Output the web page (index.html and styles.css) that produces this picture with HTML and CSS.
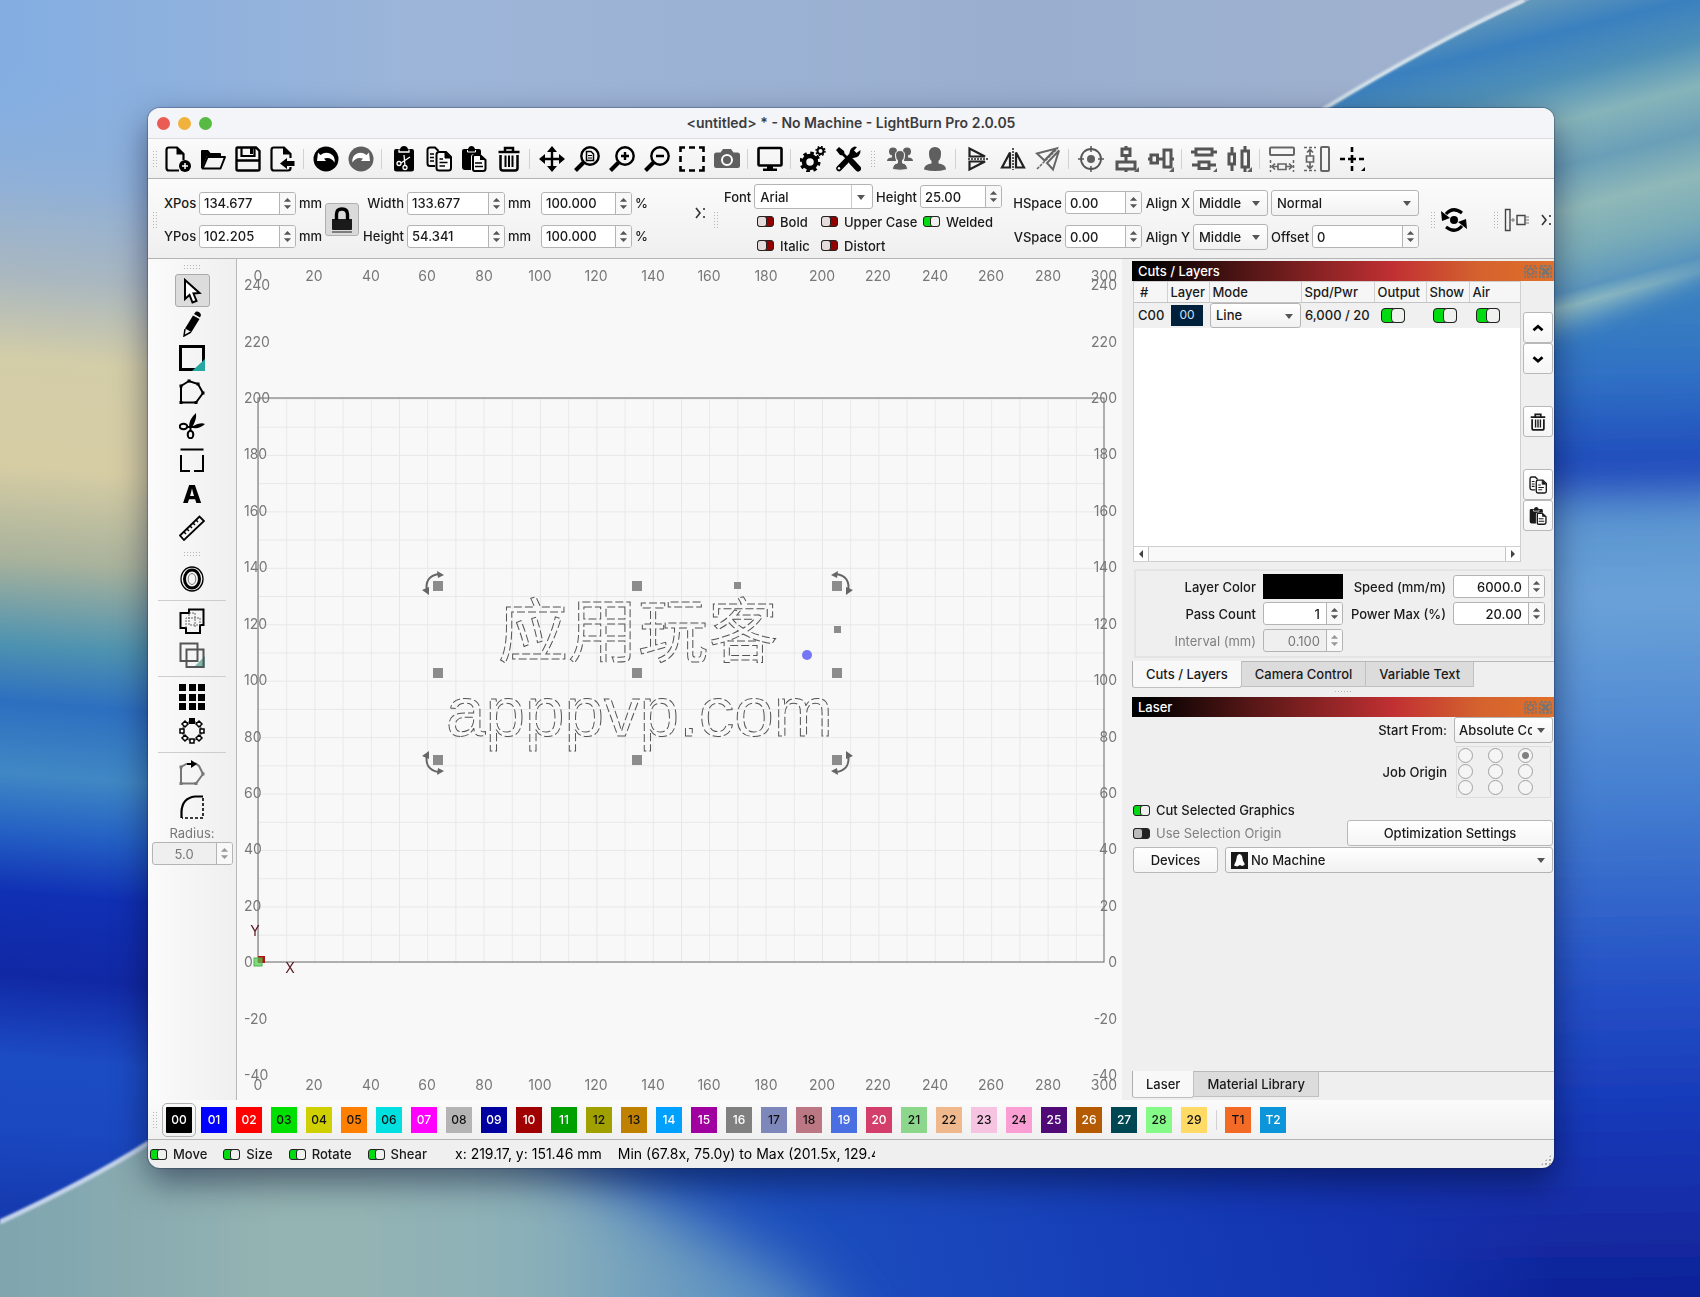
FILE: index.html
```html
<!DOCTYPE html>
<html lang="en">
<head>
<meta charset="utf-8">
<title>&lt;untitled&gt; * - No Machine - LightBurn Pro 2.0.05</title>
<link rel="stylesheet" href="styles.css">
</head>
<body>
<svg class="wallpaper" viewBox="0 0 1700 1297" preserveAspectRatio="none" aria-hidden="true">
  <defs>
    <linearGradient id="wTop" x1="0" x2="1"><stop offset="0" stop-color="#83aee2"/><stop offset=".25" stop-color="#9db5d8"/><stop offset=".6" stop-color="#9aafd0"/><stop offset="1" stop-color="#a2b2cc"/></linearGradient>
    <linearGradient id="wLeft" gradientUnits="userSpaceOnUse" x1="0" y1="60" x2="-90" y2="1240"><stop offset="0" stop-color="#86afe0" stop-opacity="0"/><stop offset=".1" stop-color="#8fb0d8"/><stop offset=".18" stop-color="#a9b7c0"/><stop offset=".25" stop-color="#d3cda8"/><stop offset=".34" stop-color="#d6cda4"/><stop offset=".42" stop-color="#a8b29c"/><stop offset=".49" stop-color="#4f93b0"/><stop offset=".54" stop-color="#2d6fc0"/><stop offset=".6" stop-color="#4088c4"/><stop offset=".65" stop-color="#2460c4"/><stop offset=".7" stop-color="#1030b4"/><stop offset=".77" stop-color="#1128a4"/><stop offset=".84" stop-color="#1c4cc4"/><stop offset=".9" stop-color="#1a48c0"/><stop offset="1" stop-color="#1434a8"/></linearGradient>
    <linearGradient id="wRight" gradientUnits="userSpaceOnUse" x1="1600" y1="300" x2="1620" y2="1297"><stop offset="0" stop-color="#3a80c0"/><stop offset=".08" stop-color="#2f70c4"/><stop offset=".17" stop-color="#1f49bc"/><stop offset=".22" stop-color="#5b95d0"/><stop offset=".3" stop-color="#6aa2d8"/><stop offset=".5" stop-color="#447ed0"/><stop offset=".68" stop-color="#2552c6"/><stop offset=".82" stop-color="#1638b8"/><stop offset="1" stop-color="#102296"/></linearGradient>
    <linearGradient id="wStripe" gradientUnits="userSpaceOnUse" x1="1560" y1="-20" x2="1650" y2="330"><stop offset="0" stop-color="#6f9fb8"/><stop offset=".14" stop-color="#3a80bf"/><stop offset=".26" stop-color="#4f90b8"/><stop offset=".38" stop-color="#86b4ba"/><stop offset=".5" stop-color="#6a9fb8"/><stop offset=".62" stop-color="#8fb8b8"/><stop offset=".74" stop-color="#78abb8"/><stop offset=".84" stop-color="#5b96be"/><stop offset=".88" stop-color="#8fbac0"/><stop offset="1" stop-color="#3f84c0"/></linearGradient>
    <linearGradient id="wBottom" gradientUnits="userSpaceOnUse" x1="0" y1="1297" x2="1500" y2="1000"><stop offset="0" stop-color="#2458bc"/><stop offset=".46" stop-color="#1d50bc"/><stop offset=".6" stop-color="#1a48bc"/><stop offset=".8" stop-color="#1438b4"/><stop offset=".88" stop-color="#1433b0"/><stop offset="1" stop-color="#1433b0" stop-opacity="0"/></linearGradient>
    <linearGradient id="wTeal" gradientUnits="userSpaceOnUse" x1="0" y1="0" x2="760" y2="0"><stop offset="0" stop-color="#7fa4ae"/><stop offset=".4" stop-color="#96b5b3"/><stop offset=".7" stop-color="#8bb0b8"/><stop offset="1" stop-color="#5a90c4"/></linearGradient>
    <filter id="soft" x="-20%" y="-20%" width="140%" height="140%"><feGaussianBlur stdDeviation="14"/></filter>
    <filter id="haze" x="-20%" y="-40%" width="140%" height="180%"><feGaussianBlur stdDeviation="32"/></filter>
    <filter id="edge"><feGaussianBlur stdDeviation="1"/></filter>
    <clipPath id="hill"><path d="M0 1222Q90 1180 148 1143L300 1060H1700V1297H0Z"/></clipPath>
  </defs>
  <rect width="1700" height="1297" fill="url(#wTop)"/>
  <rect width="600" height="1297" fill="url(#wLeft)"/>
  <path d="M1320 112Q1430 45 1530 0H1700V420H1320Z" fill="url(#wStripe)"/>
  <path d="M1320 420Q1600 330 1760 240V1360H1320Z" fill="url(#wRight)" filter="url(#soft)"/>
  <path d="M1322 110Q1430 44 1524 0" fill="none" stroke="#d5e2ea" stroke-width="4" filter="url(#edge)"/>
  <g clip-path="url(#hill)">
    <rect y="1050" width="1700" height="250" fill="url(#wBottom)"/>
    <path d="M-150 1000H300L560 1150L800 1280L900 1420H-150Z" fill="url(#wTeal)" filter="url(#haze)"/>
  </g>
  <path d="M0 1222Q90 1180 150 1142" fill="none" stroke="#c3d3ea" stroke-width="5" filter="url(#edge)"/>
</svg>
<svg class="sprite" aria-hidden="true">
  <symbol id="i-copy" viewBox="0 0 26 26"><path d="M9 20H4Q1.500 20 1.500 17.500V4Q1.500 1.500 4 1.500H9L12.500 5" fill="none" stroke="currentColor" stroke-width="2"/><path d="M4 8H8M4 11.500H8M4 15H8" stroke="currentColor" stroke-width="1.500"/><path d="M13 6H20L25 11V22Q25 24.500 22.500 24.500H13Q10.500 24.500 10.500 22V8.500Q10.500 6 13 6Z" fill="#fafafa" stroke="currentColor" stroke-width="2"/><path d="M19 6V12H25" fill="currentColor" stroke="currentColor"/><path d="M13.500 13H17M13.500 16.500H21.500M13.500 20H19" stroke="currentColor" stroke-width="1.500"/></symbol>
  <symbol id="i-paste" viewBox="0 0 26 26"><path d="M3 3H7Q8 0 10.500 0T14 3H18Q20 3 20 5V8H13Q10 8 10 11V24H4Q1 24 1 21V5Q1 3 3 3Z"/><path d="M6.500 4V6H14.500V4" fill="none" stroke="#fff"/><path d="M13.500 9H19L24.500 14V22.500Q24.500 25 22 25H13.500Q12 25 12 23V11Q12 9 13.500 9Z" fill="#fafafa" stroke="currentColor" stroke-width="2"/><path d="M19 9V14H24.500Z"/><path d="M14 17H21M14 20.500H22" stroke="currentColor" stroke-width="1.500"/></symbol>
  <symbol id="i-trash" viewBox="0 0 26 26"><path d="M2.500 6H23.500M9 5V2H17V5" fill="none" stroke="currentColor" stroke-width="2.500"/><path d="M4.500 9V22Q4.500 24.500 7 24.500H19Q21.500 24.500 21.500 22V9" fill="none" stroke="currentColor" stroke-width="2.500"/><path d="M9.500 9.500V21M13 9.500V21M16.500 9.500V21" stroke="currentColor" stroke-width="2"/></symbol>
  <symbol id="i-spin" viewBox="0 0 10 14"><path d="M1 5L5 1L9 5Z"/><path d="M1 9L5 13L9 9Z"/></symbol>
  <symbol id="i-float" viewBox="0 0 13 13"><path d="M1 1H12V12H1Z" fill="none" stroke="currentColor" stroke-width="1.500" stroke-dasharray="3 1"/><path d="M3 6.500L6.500 3L10 6.500L6.500 10Z" fill="none" stroke="currentColor" stroke-width="1.500"/><path d="M3 3L5 5M8 8L10 10M10 3L8 5M3 10L5 8" stroke="currentColor" stroke-width="1.500"/></symbol>
  <symbol id="i-close" viewBox="0 0 13 13"><path d="M1 1H12V12H1Z" fill="none" stroke="currentColor" stroke-width="1.500" stroke-dasharray="3 1"/><path d="M3 3L10 10M10 3L3 10" stroke="currentColor" stroke-width="3"/></symbol>
  <symbol id="i-rot" viewBox="-16 -16 24 28"><path d="M-11 6Q-14 -10 1 -12" fill="none" stroke="currentColor" stroke-width="2"/><path d="M-16 4L-9 9L-9 1ZM6 -11L-1 -15L0 -8Z"/></symbol>
</svg>

<main class="window">
  <header class="titlebar">
    <div class="lights"><button class="light red" aria-label="Close"></button><button class="light amber" aria-label="Minimize"></button><button class="light green" aria-label="Zoom"></button></div>
    <h1>&lt;untitled&gt; * - No Machine - LightBurn Pro 2.0.05</h1>
  </header>

  <nav class="toolbar" aria-label="Main tools">
    <i class="grip"></i>
    <button class="tool" aria-label="New"><svg viewBox="0 0 26 26"><path d="M14 24.500H4Q1.500 24.500 1.500 22V4Q1.500 1.500 4 1.500H12L18.500 8V14" fill="none" stroke="#000" stroke-width="2.200"/><path d="M11.500 1V8.500H19"/><circle cx="20" cy="20" r="6"/><path d="M20 17V23M17 20H23" stroke="#fff" stroke-width="1.500"/></svg></button>
    <button class="tool" aria-label="Open"><svg viewBox="0 0 26 26"><path d="M1 22V5Q1 4 2 4H8L10.500 7H20Q21 7 21 8V10H7L2 22Z"/><path d="M7.500 11H25L20.500 22.500H2.500Z" fill="none" stroke="#000" stroke-width="2" stroke-linejoin="round"/></svg></button>
    <button class="tool" aria-label="Save"><svg viewBox="0 0 26 26"><path d="M2.500 1.500H21L24.500 5V23Q24.500 24.500 23 24.500H3Q1.500 24.500 1.500 23V3Q1.500 1.500 2.500 1.500Z" fill="none" stroke="#000" stroke-width="2.400"/><path d="M6.500 1V10H19.500V1" fill="none" stroke="#000" stroke-width="2.200"/><path d="M15 2H18V8H15Z"/><path d="M1 14.500H25" fill="none" stroke="#000" stroke-width="2.400"/></svg></button>
    <button class="tool" aria-label="Export"><svg viewBox="0 0 26 26"><path d="M20.500 21V22Q20.500 24.500 18 24.500H4Q1.500 24.500 1.500 22V4Q1.500 1.500 4 1.500H14L20.500 8V12" fill="none" stroke="#000" stroke-width="2.200"/><path d="M13 1V8.500H21M10 17.500L17 12V15H24.500V20H17V23Z"/></svg></button>
    <i class="sep"></i>
    <button class="tool" aria-label="Undo"><svg viewBox="0 0 26 26"><circle cx="13" cy="13" r="12.500"/><path d="M4 15L5 6.500L7.500 9Q12 5.500 17 7.500Q22.500 10 21.500 16.500Q18 10.500 11 12.500L13 15Z" fill="#fff"/></svg></button>
    <button class="tool off" aria-label="Redo"><svg viewBox="0 0 26 26"><circle cx="13" cy="13" r="12.500"/><path d="M22 15L21 6.500L18.500 9Q14 5.500 9 7.500Q3.500 10 4.500 16.500Q8 10.500 15 12.500L13 15Z" fill="#fff"/></svg></button>
    <i class="sep"></i>
    <button class="tool" aria-label="Cut"><svg viewBox="0 0 26 26"><path d="M5 3H9Q10 0 13 0T17 3H21Q23 3 23 5V23Q23 25.500 20.500 25.500H5.500Q3 25.500 3 23V5Q3 3 5 3Z"/><path d="M8 3.500V6H18V3.500M19 11L10 17M13 9L14 20" fill="none" stroke="#fff" stroke-width="1.300"/><circle cx="8" cy="17.500" r="2" fill="none" stroke="#fff" stroke-width="1.300"/><circle cx="14" cy="21.500" r="2" fill="none" stroke="#fff" stroke-width="1.300"/></svg></button>
    <button class="tool" aria-label="Copy"><svg><use href="#i-copy"/></svg></button>
    <button class="tool" aria-label="Paste"><svg><use href="#i-paste"/></svg></button>
    <button class="tool" aria-label="Delete"><svg><use href="#i-trash"/></svg></button>
    <i class="sep"></i>
    <button class="tool" aria-label="Pan"><svg viewBox="0 0 26 26"><path d="M13 3V23M3 13H23" stroke="#000" stroke-width="2.400"/><path d="M13 0L18 6H8ZM13 26L18 20H8ZM0 13L6 8V18ZM26 13L20 8V18Z"/></svg></button>
    <button class="tool" aria-label="Zoom to page"><svg viewBox="0 0 26 26"><circle cx="16" cy="10" r="8.700" fill="none" stroke="#000" stroke-width="2.400"/><path d="M9.500 16.500L1.500 24.500" stroke="#000" stroke-width="4"/><path d="M12.500 5.500H17L19.500 8V14.500H12.500Z" fill="none" stroke="#000" stroke-width="1.500"/><path d="M14 9.500H18M14 12H18" stroke="#000"/></svg></button>
    <button class="tool" aria-label="Zoom in"><svg viewBox="0 0 26 26"><circle cx="16" cy="10" r="8.700" fill="none" stroke="#000" stroke-width="2.400"/><path d="M9.500 16.500L1.500 24.500" stroke="#000" stroke-width="4"/><path d="M16 6V14M12 10H20" stroke="#000" stroke-width="2.400"/></svg></button>
    <button class="tool" aria-label="Zoom out"><svg viewBox="0 0 26 26"><circle cx="16" cy="10" r="8.700" fill="none" stroke="#000" stroke-width="2.400"/><path d="M9.500 16.500L1.500 24.500" stroke="#000" stroke-width="4"/><path d="M12 10H20" stroke="#000" stroke-width="2.400"/></svg></button>
    <button class="tool" aria-label="Frame selection"><svg viewBox="0 0 26 26"><path d="M1.500 6V1.500H6M10 1.500H16M20 1.500H24.500V6M24.500 10V16M24.500 20V24.500H20M16 24.500H10M6 24.500H1.500V20M1.500 16V10" fill="none" stroke="#000" stroke-width="2.600"/></svg></button>
    <button class="tool off" aria-label="Camera"><svg viewBox="0 0 26 26"><path d="M2.500 6.500H6.500L9 3H17L19.500 6.500H23.500Q26 6.500 26 9V19.500Q26 22 23.500 22H2.500Q0 22 0 19.500V9Q0 6.500 2.500 6.500Z"/><circle cx="13" cy="14" r="5" fill="none" stroke="#fff" stroke-width="2"/></svg></button>
    <i class="sep"></i>
    <button class="tool" aria-label="Preview"><svg viewBox="0 0 26 26"><rect x="1.500" y="2" width="23" height="17.500" rx="1" fill="none" stroke="#000" stroke-width="2.600"/><path d="M10 20H16V22.500H20V25H6V22.500H10Z"/></svg></button>
    <i class="sep"></i>
    <button class="tool" aria-label="Settings"><svg viewBox="0 0 26 26"><circle cx="10" cy="16" r="6" fill="none" stroke="#000" stroke-width="4.500"/><circle cx="10" cy="16" r="9" fill="none" stroke="#000" stroke-width="3" stroke-dasharray="3.500 3.570"/><circle cx="20.500" cy="5" r="3" fill="none" stroke="#000" stroke-width="2"/><circle cx="20.500" cy="5" r="4.500" fill="none" stroke="#000" stroke-width="1.500" stroke-dasharray="1.700 1.830"/></svg></button>
    <button class="tool" aria-label="Device settings"><svg viewBox="0 0 26 26"><path d="M1 4L4 1L9 5L9.500 7.500L14 12L12 14L7.500 9.500L5 9Z"/><path d="M17 16L23 22.500" stroke="#000" stroke-width="6" stroke-linecap="round"/><path d="M4 22.500L18 8" stroke="#000" stroke-width="5.500" stroke-linecap="round"/><path d="M15 10Q13 3 19.500 0.500L22 1L19 4.500L21.500 7L25.500 4Q26 11 18 12Z"/><circle cx="4" cy="22.300" r="1.200" fill="#fff"/></svg></button>
    <i class="grip mid"></i>
    <button class="tool off" aria-label="Group"><svg viewBox="0 0 26 26"><circle cx="6" cy="5.500" r="4"/><circle cx="20" cy="5.500" r="4"/><path d="M0 15Q0 11.500 5 11.500V8H8L9 15ZM26 15Q26 11.500 21 11.500V8H18L17 15Z"/><path d="M8.500 9Q8.500 4.500 13 4.500T17.500 9Q17.500 13 15.500 14.500V17Q20.500 18 20.500 23.500Q13 25 5.500 23.500Q5.500 18 10.500 17V14.500Q8.500 13 8.500 9Z" stroke="#f5f5f5"/></svg></button>
    <button class="tool off" aria-label="Ungroup"><svg viewBox="0 0 26 26"><path d="M7 7.500Q7 1 13 1T19 7.500Q19 13 16.500 15V17.500Q24 18.500 24 23.500Q13 26.500 2 23.500Q2 18.500 9.500 17.500V15Q7 13 7 7.500Z"/></svg></button>
    <i class="sep"></i>
    <button class="tool dim" aria-label="Flip vertical"><svg viewBox="0 0 26 26"><path d="M4.500 2.500V10.500H20ZM4.500 23.500V15.500H20Z" fill="none" stroke="#222" stroke-width="2.200"/><path d="M3 13H24" stroke="#222" stroke-width="1.500" stroke-dasharray="2 1"/></svg></button>
    <button class="tool dim" aria-label="Flip horizontal"><svg viewBox="0 0 26 26"><path d="M2 21.500H10V6.500ZM24 21.500H16V6.500Z" fill="none" stroke="#222" stroke-width="2.200"/><path d="M13 2V24" stroke="#222" stroke-width="1.500" stroke-dasharray="2 1"/></svg></button>
    <button class="tool off" aria-label="Mirror across line"><svg viewBox="0 0 26 26"><path d="M2 7.500L21 2.500L9.500 14.500ZM24 4.500L18 23.500L12 17Z" fill="none" stroke="#666" stroke-width="2"/><path d="M2 23L23 2" stroke="#666" stroke-width="1.500" stroke-dasharray="3 1"/></svg></button>
    <i class="sep"></i>
    <button class="tool off" aria-label="Move to center"><svg viewBox="0 0 26 26"><circle cx="13" cy="13" r="10" fill="none" stroke="#555" stroke-width="1.800"/><circle cx="13" cy="13" r="4"/><path d="M13 0V6M13 20V26M0 13H6M20 13H26" stroke="#555" stroke-width="1.500"/></svg></button>
    <button class="tool off" aria-label="Align vertical centers"><svg viewBox="0 0 26 26"><path d="M9 3H17V9.500H9ZM4 16H22V23H4ZM13 0V3M13 9.500V16M13 23V26" fill="none" stroke="#555" stroke-width="3"/><path d="M26 21V26H21Z"/></svg></button>
    <button class="tool off" aria-label="Align horizontal centers"><svg viewBox="0 0 26 26"><path d="M3 9H9.500V17H3ZM16 4H23V21H16ZM0 13H3M9.500 13H16M23 13H26" fill="none" stroke="#555" stroke-width="3"/><path d="M26 21V26H21Z"/></svg></button>
    <i class="sep"></i>
    <button class="tool off" aria-label="Distribute vertically"><svg viewBox="0 0 26 26"><path d="M5 3H21V9H5ZM8 16H18V22.500H8ZM0 6H5M21 6H26M1 19H8M18 19H25" fill="none" stroke="#555" stroke-width="3"/><path d="M26 22V26H22Z"/></svg></button>
    <button class="tool off" aria-label="Distribute horizontally"><svg viewBox="0 0 26 26"><path d="M3 8H8.500V18H3ZM16 5H22.500V21H16ZM6 1V8M6 18V25M19 0V5M19 21V26" fill="none" stroke="#555" stroke-width="3"/><path d="M26 21V26H21Z"/></svg></button>
    <i class="sep"></i>
    <button class="tool off" aria-label="Make same width"><svg viewBox="0 0 26 26"><rect x="1" y="1.500" width="24" height="7.500" rx="1" fill="none" stroke="#666" stroke-width="2"/><path d="M1.500 14V26M24.500 14V26" stroke="#666" stroke-width="1.500" stroke-dasharray="3 2"/><path d="M9 18H17V23.500H9ZM9 20.500H4M17 20.500H22M6 17.500L3 20.500L6 23.500M20 17.500L23 20.500L20 23.500" fill="none" stroke="#666" stroke-width="1.700"/></svg></button>
    <button class="tool off" aria-label="Make same height"><svg viewBox="0 0 26 26"><rect x="17" y="1" width="8" height="24" rx="1" fill="none" stroke="#666" stroke-width="2"/><path d="M0 1.500H12M0 24.500H12" stroke="#666" stroke-width="1.500" stroke-dasharray="3 2"/><path d="M2.500 10H9.500V16H2.500ZM6 10V4M6 16V22M3 6.500L6 3.500L9 6.500M3 19.500L6 22.500L9 19.500" fill="none" stroke="#666" stroke-width="1.700"/></svg></button>
    <button class="tool" aria-label="Snap"><svg viewBox="0 0 26 26"><path d="M13 1V6M13 9V17M13 20V25M1 13H6M9 13H17M20 13H25" stroke="#000" stroke-width="2.600"/><path d="M26 21V25H22Z"/></svg></button>
  </nav>

  <section class="toolbar props" aria-label="Shape properties">
    <i class="grip"></i>
    <div class="form pos">
      <label for="xpos">XPos</label><span class="spin"><input id="xpos" value="134.677"><svg><use href="#i-spin"/></svg></span><span>mm</span>
      <label for="ypos">YPos</label><span class="spin"><input id="ypos" value="102.205"><svg><use href="#i-spin"/></svg></span><span>mm</span>
    </div>
    <button class="lock" aria-label="Lock aspect ratio"><svg viewBox="0 0 22 26"><path d="M1 12H21V22Q21 23 20 23H2Q1 23 1 22Z"/><path d="M1 25H21" stroke="#222" stroke-width="1"/><path d="M5.500 13V7.500Q5.500 2 11 2T16.500 7.500V13" fill="none" stroke="#000" stroke-width="3.400"/></svg></button>
    <div class="form size">
      <label for="w">Width</label><span class="spin"><input id="w" value="133.677"><svg><use href="#i-spin"/></svg></span><span>mm</span><span class="spin pct"><input aria-label="Width percent" value="100.000"><svg><use href="#i-spin"/></svg></span><span>%</span>
      <label for="h">Height</label><span class="spin"><input id="h" value="54.341"><svg><use href="#i-spin"/></svg></span><span>mm</span><span class="spin pct"><input aria-label="Height percent" value="100.000"><svg><use href="#i-spin"/></svg></span><span>%</span>
    </div>
    <button class="more" aria-label="More"><svg viewBox="0 0 10 12"><path d="M1 1L5 6L1 11M9 1V3M9 9V11" fill="none" stroke="#333" stroke-width="1.600"/></svg></button>
    <i class="grip"></i>
    <div class="fontbox">
      <div class="line"><label for="font">Font</label><span class="pick combo"><select id="font"><option>Arial</option></select></span><label for="fh">Height</label><span class="spin fh"><input id="fh" value="25.00"><svg><use href="#i-spin"/></svg></span></div>
      <div class="checks">
        <label><input type="checkbox" class="toggle">Bold</label><label><input type="checkbox" class="toggle">Upper Case</label><label><input type="checkbox" class="toggle" checked>Welded</label>
        <label><input type="checkbox" class="toggle">Italic</label><label><input type="checkbox" class="toggle">Distort</label>
      </div>
    </div>
    <div class="form space">
      <label for="hs">HSpace</label><span class="spin"><input id="hs" value="0.00"><svg><use href="#i-spin"/></svg></span><label for="ax">Align X</label><span class="pick"><select id="ax"><option>Middle</option></select></span><span class="pick"><select aria-label="Text mode"><option>Normal</option></select></span>
      <label for="vs">VSpace</label><span class="spin"><input id="vs" value="0.00"><svg><use href="#i-spin"/></svg></span><label for="ay">Align Y</label><span class="pick"><select id="ay"><option>Middle</option></select></span><span class="offset"><label for="off">Offset</label><span class="spin"><input id="off" value="0"><svg><use href="#i-spin"/></svg></span></span>
    </div>
    <i class="grip"></i>
    <button class="tool" aria-label="Rotary"><svg viewBox="0 0 26 26"><circle cx="13" cy="13" r="4"/><path d="M5 7Q12 -1 21 6M21 19Q14 27 5 20" fill="none" stroke="#000" stroke-width="3.200"/><path d="M0 4L9 11L1 14ZM26 22L17 15L25 12Z"/></svg></button>
    <i class="grip last"></i>
    <button class="tool" aria-label="Dock"><svg viewBox="0 0 26 26"><path d="M1.500 2.500H6V23.500H1.500ZM13 8.500H21V17.500H13Z" fill="none" stroke="#444" stroke-width="1.400"/><path d="M7 13H11M9 11V15M22 10H25M22 13H25M22 16H25" stroke="#777"/></svg></button>
    <button class="more" aria-label="More"><svg viewBox="0 0 10 12"><path d="M1 1L5 6L1 11M9 1V3M9 9V11" fill="none" stroke="#333" stroke-width="1.600"/></svg></button>
  </section>

  <div class="work">
    <nav class="side" aria-label="Drawing tools">
      <i class="grip flat"></i>
      <button class="tool on" aria-label="Select"><svg viewBox="0 0 26 26"><path d="M6 2V21L10.500 17L13.500 24.500L17.500 23L14.500 15.500L20.500 15Z" fill="#fff" stroke="#000" stroke-width="2"/></svg></button>
      <button class="tool" aria-label="Draw lines"><svg viewBox="0 0 26 26"><path d="M15 3L21 6.500L22 4Q21 0 17 .5ZM14 4.500L20.500 8L12.500 21L6 17.500Z"/><path d="M6 18L5 25L12 21" fill="none" stroke="#000" stroke-width="1.500"/></svg></button>
      <button class="tool" aria-label="Rectangle"><svg viewBox="0 0 26 26"><rect x="1.500" y="1.500" width="23" height="23" fill="none" stroke="#000" stroke-width="3"/><path d="M26 14V26H13Z" fill="#25a8a0"/></svg></button>
      <button class="tool" aria-label="Polygon"><svg viewBox="0 0 26 26"><path d="M2 7L10 2L19 5L24 14L17 23.500H2Z" fill="none" stroke="#000" stroke-width="2"/><path d="M.5 5.500h3v3h-3zM8.500.5h3v3h-3zM17.500 3.500h3v3h-3zM22.500 12.500h3v3h-3zM15.500 22h3v3h-3zM.5 22h3v3h-3z"/></svg></button>
      <button class="tool" aria-label="Trim"><svg viewBox="0 0 26 26"><path d="M17 0Q18 7 12.500 15L10 14Q10 6 17 0ZM26 11Q21 9 14 13V15Q21 16 26 11Z"/><ellipse cx="4.500" cy="13.500" rx="3.800" ry="2.800" fill="none" stroke="#000" stroke-width="2"/><ellipse cx="11.500" cy="21.500" rx="2.800" ry="3.800" fill="none" stroke="#000" stroke-width="2"/><path d="M8 14L14 14M11.500 18V13" stroke="#000" stroke-width="2"/></svg></button>
      <button class="tool" aria-label="Break apart"><svg viewBox="0 0 26 26"><path d="M1.500 2.500H24.500M2 8V24H11M15 24H24V8" fill="none" stroke="#000" stroke-width="2"/></svg></button>
      <button class="tool letter" aria-label="Text">A</button>
      <button class="tool" aria-label="Measure"><svg viewBox="0 0 26 26"><path d="M1 20.500L20.500 1.500L25 6L5 25Z" fill="none" stroke="#000" stroke-width="1.800"/><path d="M5 17L7 19M8 14L10 16M11 11L13 13M14 8L16 10M17 5L19 7" stroke="#000" stroke-width="1.500"/></svg></button>
      <i class="grip flat second"></i>
      <button class="tool" aria-label="Offset shapes"><svg viewBox="0 0 26 26"><ellipse cx="13" cy="13" rx="11" ry="12" fill="none" stroke="#000" stroke-width="1.300"/><ellipse cx="13" cy="13" rx="7.500" ry="9" fill="none" stroke="#000" stroke-width="3"/><ellipse cx="13" cy="13" rx="3.800" ry="5.500" fill="none" stroke="#777"/></svg></button>
      <hr>
      <button class="tool" aria-label="Weld"><svg viewBox="0 0 26 26"><path d="M10 5V1.500H24.500V17H21V25H7V20H1.500V5Z" fill="none" stroke="#000" stroke-width="2"/><path d="M10 5H16V20M7 20V10H21V17H10V5" fill="none" stroke="#666" stroke-dasharray="2 1"/></svg></button>
      <button class="tool off" aria-label="Boolean"><svg viewBox="0 0 26 26"><path d="M26 14V26H14Z" fill="#7db5a8"/><path d="M1.500 1.500H18.500V19H1.500ZM7.500 7.500H24.500V25H7.500Z" fill="none" stroke="#555" stroke-width="2"/></svg></button>
      <hr>
      <button class="tool" aria-label="Grid array"><svg viewBox="0 0 26 26"><path d="M0 0h7v7h-7zM10 0h7v7h-7zM19 0h7v7h-7zM0 10h7v7h-7zM10 10h7v7h-7zM19 10h7v7h-7zM0 19h7v7h-7zM10 19h7v7h-7zM19 19h7v7h-7z"/></svg></button>
      <button class="tool" aria-label="Circular array"><svg viewBox="0 0 26 26"><circle cx="13" cy="13" r="9.500" fill="none" stroke="#000"/><path d="M10 0h6v6h-6z"/><path d="M11 21h4v4h-4zM1 11h4v4h-4zM21 11h4v4h-4zM6 3l3 3l-3 3l-3-3zM20 3l3 3l-3 3l-3-3zM6 17l3 3l-3 3l-3-3zM20 17l3 3l-3 3l-3-3z" fill="#fff" stroke="#000" stroke-width="1.500"/></svg></button>
      <hr>
      <button class="tool off" aria-label="Start point"><svg viewBox="0 0 26 26"><path d="M2 7L8 3.500M16 3L20 6L24 14L17 23.500H2V7" fill="none" stroke="#777" stroke-width="2"/><path d="M8 3H12V0L18 4L12 8V5H8Z" fill="#000"/><path d="M.5 5.500h3v3h-3zM22.500 12.500h3v3h-3zM15.500 22h3v3h-3zM.5 22h3v3h-3z" fill="#777"/></svg></button>
      <button class="tool" aria-label="Radius"><svg viewBox="0 0 26 26"><path d="M2.500 24V18Q3 4 16 2.500H24" fill="none" stroke="#000" stroke-width="2.200"/><path d="M24 4V24H3" fill="none" stroke="#000" stroke-width="1.600" stroke-dasharray="3 2"/></svg></button>
      <label for="radius">Radius:</label>
      <span class="spin faded"><input id="radius" value="5.0" disabled><svg><use href="#i-spin"/></svg></span>
    </nav>

    <svg class="canvas" role="img" aria-label="Work area">
      <defs><pattern id="grid" x="21" y="139.500" width="28.200" height="28.220" patternUnits="userSpaceOnUse"><path d="M.5 0V29M0 .5H29" stroke="#e8e8e8" fill="none"/></pattern></defs>
      <rect x="21" y="139" width="846" height="565" fill="url(#grid)"/>
      <rect x="21" y="139" width="846" height="564" fill="none" stroke="#666" stroke-width="1"/>
      <g class="tick mid">
        <text x="21" y="22">0</text><text x="77" y="22">20</text><text x="134" y="22">40</text><text x="190" y="22">60</text><text x="247" y="22">80</text><text x="303" y="22">100</text><text x="359" y="22">120</text><text x="416" y="22">140</text><text x="472" y="22">160</text><text x="529" y="22">180</text><text x="585" y="22">200</text><text x="641" y="22">220</text><text x="698" y="22">240</text><text x="754" y="22">260</text><text x="811" y="22">280</text><text x="867" y="22">300</text>
        <text x="21" y="831">0</text><text x="77" y="831">20</text><text x="134" y="831">40</text><text x="190" y="831">60</text><text x="247" y="831">80</text><text x="303" y="831">100</text><text x="359" y="831">120</text><text x="416" y="831">140</text><text x="472" y="831">160</text><text x="529" y="831">180</text><text x="585" y="831">200</text><text x="641" y="831">220</text><text x="698" y="831">240</text><text x="754" y="831">260</text><text x="811" y="831">280</text><text x="867" y="831">300</text>
      </g>
      <g class="tick">
        <text x="7" y="31">240</text><text x="7" y="88">220</text><text x="7" y="144">200</text><text x="7" y="200">180</text><text x="7" y="257">160</text><text x="7" y="313">140</text><text x="7" y="370">120</text><text x="7" y="426">100</text><text x="7" y="483">80</text><text x="7" y="539">60</text><text x="7" y="595">40</text><text x="7" y="652">20</text><text x="7" y="708">0</text><text x="7" y="765">-20</text><text x="7" y="821">-40</text>
      </g>
      <g class="tick end">
        <text x="880" y="31">240</text><text x="880" y="88">220</text><text x="880" y="144">200</text><text x="880" y="200">180</text><text x="880" y="257">160</text><text x="880" y="313">140</text><text x="880" y="370">120</text><text x="880" y="426">100</text><text x="880" y="483">80</text><text x="880" y="539">60</text><text x="880" y="595">40</text><text x="880" y="652">20</text><text x="880" y="708">0</text><text x="880" y="765">-20</text><text x="880" y="821">-40</text>
      </g>
      <text class="axis" x="18" y="677">Y</text><text class="axis" x="53" y="714">X</text>
      <rect x="21" y="697" width="7" height="7" fill="#b01515"/><rect x="17" y="699" width="8" height="8" fill="#4fd04f" fill-opacity=".7" stroke="#4fae4f"/>
      <text class="shape" x="261" y="398">应用玩客</text>
      <text class="shape latin" x="209" y="477">apppvp.com</text>
      <g fill="#8c8c8c"><path d="M196 322h10v10h-10zM395 322h10v10h-10zM595 322h10v10h-10zM196 409h10v10h-10zM395 409h10v10h-10zM595 409h10v10h-10zM196 496h10v10h-10zM395 496h10v10h-10zM595 496h10v10h-10zM497 323h7v7h-7zM597 367h7v7h-7z"/></g>
      <g class="rot"><use href="#i-rot" x="-16" y="-16" width="24" height="28" transform="translate(201 327)"/><use href="#i-rot" x="-16" y="-16" width="24" height="28" transform="translate(600 327) scale(-1 1)"/><use href="#i-rot" x="-16" y="-16" width="24" height="28" transform="translate(201 501) scale(1 -1)"/><use href="#i-rot" x="-16" y="-16" width="24" height="28" transform="translate(600 501) scale(-1 -1)"/></g>
      <circle cx="570" cy="396" r="5" fill="#7476f5"/>
    </svg>

    <aside class="panels">
      <h2 class="dock">Cuts / Layers<span><svg><use href="#i-float"/></svg><svg><use href="#i-close"/></svg></span></h2>
      <div class="layers">
        <div class="list">
          <table>
            <colgroup><col class="c1"><col class="c2"><col class="c3"><col class="c4"><col class="c5"><col class="c6"><col></colgroup>
            <thead><tr><th class="num">#</th><th>Layer</th><th>Mode</th><th>Spd/Pwr</th><th>Output</th><th>Show</th><th>Air</th></tr></thead>
            <tbody><tr><td>C00</td><td><span class="chip">00</span></td><td><span class="pick"><select aria-label="Mode"><option>Line</option></select></span></td><td class="spd">6,000 / 20</td><td><input type="checkbox" class="toggle big" aria-label="Output" checked></td><td><input type="checkbox" class="toggle big" aria-label="Show" checked></td><td><input type="checkbox" class="toggle big" aria-label="Air" checked></td></tr></tbody>
          </table>
          <div class="hscroll"><svg viewBox="0 0 6 8"><path d="M5 0V8L1 4Z"/></svg><i></i><svg viewBox="0 0 6 8"><path d="M1 0V8L5 4Z"/></svg></div>
        </div>
        <div class="order">
          <button aria-label="Move up"><svg viewBox="0 0 16 16"><path d="M4 10L8 6.500L12 10" fill="none" stroke="#000" stroke-width="2.500"/></svg></button>
          <button aria-label="Move down"><svg viewBox="0 0 16 16"><path d="M4 6.500L8 10L12 6.500" fill="none" stroke="#000" stroke-width="2.500"/></svg></button>
          <button class="apart" aria-label="Delete layer"><svg><use href="#i-trash"/></svg></button>
          <button class="apart" aria-label="Copy settings"><svg><use href="#i-copy"/></svg></button>
          <button aria-label="Paste settings"><svg><use href="#i-paste"/></svg></button>
        </div>
      </div>
      <div class="settings">
        <label for="color">Layer Color</label><button id="color" class="color" aria-label="Layer Color"></button><label for="speed">Speed (mm/m)</label><span class="spin"><input id="speed" value="6000.0"><svg><use href="#i-spin"/></svg></span>
        <label for="pass">Pass Count</label><span class="spin"><input id="pass" value="1"><svg><use href="#i-spin"/></svg></span><label for="pmax">Power Max (%)</label><span class="spin"><input id="pmax" value="20.00"><svg><use href="#i-spin"/></svg></span>
        <label for="intv" class="muted">Interval (mm)</label><span class="spin faded"><input id="intv" value="0.100" disabled><svg><use href="#i-spin"/></svg></span>
      </div>
      <div class="tabs"><button class="cur">Cuts / Layers</button><button>Camera Control</button><button>Variable Text</button></div>
      <i class="grip flat split"></i>
      <h2 class="dock">Laser<span><svg><use href="#i-float"/></svg><svg><use href="#i-close"/></svg></span></h2>
      <div class="laser">
        <div class="row right"><label for="start">Start From:</label><span class="pick start"><select id="start"><option>Absolute Coords</option></select></span></div>
        <div class="row right origin"><span>Job Origin</span><fieldset aria-label="Job Origin"><input type="radio" name="o" aria-label="Top left"><input type="radio" name="o" aria-label="Top"><input type="radio" name="o" aria-label="Top right" checked><input type="radio" name="o" aria-label="Left"><input type="radio" name="o" aria-label="Center"><input type="radio" name="o" aria-label="Right"><input type="radio" name="o" aria-label="Bottom left"><input type="radio" name="o" aria-label="Bottom"><input type="radio" name="o" aria-label="Bottom right"></fieldset></div>
        <label class="row cutsel"><input type="checkbox" class="toggle" checked>Cut Selected Graphics</label>
        <div class="row between"><label class="muted"><input type="checkbox" class="toggle" disabled>Use Selection Origin</label><button class="push opt">Optimization Settings</button></div>
        <div class="row dev"><button class="push">Devices</button><span class="pick machine"><svg viewBox="0 0 17 17"><path d="M0 0H17V17H0Z"/><path d="M6 4Q8.500 0 11 4L12 9Q14 11 13.500 13L11 14L9 13L6 14.500L3 13.500Q4 11 5 9Z" fill="#fff"/></svg><select aria-label="Device"><option>No Machine</option></select></span></div>
      </div>
      <div class="tabs low"><button class="cur">Laser</button><button>Material Library</button></div>
    </aside>
  </div>

  <section class="palette" aria-label="Layer colors">
    <i class="grip"></i>
    <button class="sel" style="background:#000">00</button><button style="background:#00f">01</button><button style="background:#f00">02</button><button class="k" style="background:#00e000">03</button><button class="k" style="background:#d0d000">04</button><button class="k" style="background:#ff8000">05</button><button class="k" style="background:#00e0e0">06</button><button style="background:#f0f">07</button><button class="k" style="background:#b4b4b4">08</button><button style="background:#0000a0">09</button><button style="background:#a00000">10</button><button style="background:#00a000">11</button><button class="k" style="background:#a0a000">12</button><button class="k" style="background:#c08000">13</button><button style="background:#00a0ff">14</button><button style="background:#a000a0">15</button><button style="background:#808080">16</button><button class="k" style="background:#7d87b9">17</button><button class="k" style="background:#bb7784">18</button><button style="background:#4a6fe3">19</button><button style="background:#d33f6a">20</button><button class="k" style="background:#8cd78c">21</button><button class="k" style="background:#f0b98d">22</button><button class="k" style="background:#f6c4e1">23</button><button class="k" style="background:#fa9ed4">24</button><button style="background:#500a78">25</button><button style="background:#b45a00">26</button><button style="background:#004754">27</button><button class="k" style="background:#86fa88">28</button><button class="k" style="background:#ffdb66">29</button><i class="sep"></i><button class="k" style="background:#f36926">T1</button><button style="background:#0c96d9">T2</button>
  </section>

  <footer class="status">
    <label><input type="checkbox" class="toggle" checked>Move</label><label><input type="checkbox" class="toggle" checked>Size</label><label><input type="checkbox" class="toggle" checked>Rotate</label><label><input type="checkbox" class="toggle" checked>Shear</label>
    <span class="coords">x: 219.17, y: 151.46 mm</span><span class="bounds">Min (67.8x, 75.0y) to Max (201.5x, 129.4y)</span>
    <i class="resize"></i>
  </footer>
</main>
</body>
</html>
```
FILE: styles.css
```css
* { box-sizing: border-box; }

body {
  margin: 0;
  min-height: 100vh;
  padding: 108px 146px 129px 148px;
  display: flex;
  background: #1a48bc;
  font: 500 13px/16px Inter, "Liberation Sans", sans-serif;
  color: #1a1a1a;
}

button, input, select { font: inherit; color: inherit; margin: 0; padding: 0; border: 0; background: none; }
svg { fill: currentColor; display: block; }
.sprite { position: absolute; width: 0; height: 0; }
.wallpaper { position: fixed; inset: 0; width: 100%; height: 100%; z-index: -1; }

.window {
  flex: 1;
  min-width: 0;
  display: flex;
  flex-direction: column;
  border-radius: 12px;
  overflow: hidden;
  background: #efefef;
  box-shadow: 0 0 1px 1px rgba(20, 30, 60, .3), 0 14px 34px rgba(0, 5, 40, .5);
}

/* Title bar */
.titlebar { height: 30px; display: grid; grid-template-columns: 1fr auto 1fr; align-items: center; background: #f4f5f9; }
.titlebar h1 { margin: 0; font-size: 14px; font-weight: 600; color: #3c3c3e; }
.lights { display: flex; gap: 8px; padding-left: 9px; }
.light { width: 13px; height: 13px; border-radius: 50%; }
.red { background: #ea5b54; }
.amber { background: #f0b23c; }
.green { background: #57bb43; }

/* Tool bars */
.toolbar {
  height: 41px;
  display: flex;
  align-items: center;
  border-top: 1px solid #dcdcdc;
  border-bottom: 1px solid #b4b4b4;
  background: linear-gradient(#fbfbfb, #efefef);
}
.grip {
  flex: none;
  width: 6px;
  height: 18px;
  margin: 0 7px 0 4px;
  background: radial-gradient(circle, #b5b5b5 36%, transparent 40%) 0 0 / 3px 3px;
}
.grip.mid { margin: 0 6px 0 5px; }
.grip.flat { width: 18px; height: 6px; margin: 5px 0 4px; }
.grip.second { margin: 6px 0 5px; }
.sep { flex: none; width: 1px; height: 20px; margin: 0 4px 0 3px; background: #d2d2d2; }
.tool { flex: none; width: 35px; height: 34px; display: flex; align-items: center; justify-content: center; color: #000; }
.toolbar > .tool:first-of-type { margin-left: -5px; }
.tool svg { width: 26px; height: 26px; }
.off { color: #5f5f5f; }

.spin { display: flex; height: 23px; border: 1px solid #b4b4b4; border-radius: 3px; background: #fff; overflow: hidden; }
.spin input { flex: 1; min-width: 0; width: 0; padding-left: 4px; }
.spin svg { flex: none; width: 16px; height: 21px; padding: 4px 3px; border-left: 1px solid #b4b4b4; background: #f8f8f8; color: #555; }
.spin.faded { background: #efefef; color: #777; font-weight: 400; }
.spin.faded svg { color: #999; }

.pick { position: relative; display: flex; align-items: center; height: 26px; border: 1px solid #b4b4b4; border-radius: 3px; background: linear-gradient(#fff, #f1f1f1); }
.pick::after { content: ""; position: absolute; right: 7px; top: 10px; border: 4px solid transparent; border-top: 5px solid #555; border-bottom: 0; pointer-events: none; }
.pick select { flex: 1; min-width: 0; width: 0; height: 24px; padding: 0 20px 0 5px; appearance: none; }

.toggle {
  appearance: none;
  flex: none;
  position: relative;
  width: 17px;
  height: 11px;
  border: 1px solid #222;
  border-radius: 3px;
  background: #900000;
}
.toggle::after { content: ""; position: absolute; inset: -1px auto -1px -1px; width: 8px; border: 1px solid #222; border-radius: 3px; background: #e6dcdc; }
.toggle:checked { background: #00dc10; }
.toggle:checked::after { inset: -1px -1px -1px auto; background: #eff1ef; }
.toggle:disabled { background: #222; }
.toggle:disabled::after { background: #bbb; }
.toggle.big { display: block; width: 24px; height: 15px; border-radius: 4px; }
.toggle.big::after { width: 12px; border-radius: 4px; }

/* Property bar */
.props { height: 80px; border-top: 0; padding-top: 2px; }
.form { display: grid; align-items: center; gap: 8px 3px; white-space: nowrap; }
.form label { text-align: right; }
.pos { grid-template-columns: 32px 97px 24px; row-gap: 10px; margin-left: -1px; }
.size { grid-template-columns: 42px 98px 24px 97px 12px; row-gap: 10px; margin-left: 3px; }
.size .pct { margin-left: 6px; }
.lock { flex: none; width: 34px; height: 33px; margin-left: 2px; border: 1px solid #b0b0b0; border-radius: 3px; background: #dadada; display: grid; place-items: center; }
.lock svg { width: 22px; height: 26px; }
.more { flex: none; width: 10px; height: 12px; margin: -14px 0 0 48px; }
.more svg { width: 10px; height: 12px; }
.more + .grip { margin-left: 8px; margin-right: 0; }
.more:last-child { margin: 0 0 0 7px; }
.fontbox { width: 283px; padding-left: 5px; margin-top: -2px; }
.fontbox .line { display: flex; align-items: center; gap: 3px; height: 26px; }
.fontbox .line label { white-space: nowrap; }
.combo { flex: 1; height: 25px; background: #fff; }
.combo::before { content: ""; position: absolute; right: 20px; top: 0; bottom: 0; border-left: 1px solid #ccc; }
.fh { width: 82px; }
.checks { display: grid; grid-template-columns: 64px 102px auto; row-gap: 8px; padding-left: 33px; margin-top: 4px; }
.checks label, .status label, .laser label { display: flex; align-items: center; gap: 6px; white-space: nowrap; }
.space { grid-template-columns: 50px 77px 45px 75px 148px; column-gap: 3px; margin-left: 10px; }
.offset { display: flex; align-items: center; gap: 3px; }
.offset .spin { flex: 1; }
.space + .grip { margin-left: 11px; margin-right: 0; }
.last { margin-left: 22px; margin-right: 0; }

/* Work area */
.work { flex: 1; display: flex; }
.side { flex: none; width: 89px; display: flex; flex-direction: column; align-items: center; border-right: 1px solid #b8b8b8; background: linear-gradient(90deg, #fbfbfb, #efefef); color: #777; font-weight: 400; }
.side .tool { width: 35px; height: 34px; }
.side .tool.on { height: 33px; border: 1px solid #aaa; border-radius: 3px; background: #dcdcdc; }
.side .letter { font-weight: 800; font-size: 25px; }
.side hr { flex: none; width: 68px; height: 1px; margin: 4px 0 3px; border: 0; background: #cdcdcd; }
.side label { line-height: 18px; }
.side .spin { width: 81px; }
.side .spin input { padding: 0; text-align: center; }
.canvas { flex: 1; min-width: 0; width: 0; height: auto; background: #f8f8f8; }
.tick { font-size: 14px; font-weight: 400; fill: #777; }
.mid { text-anchor: middle; }
.end { text-anchor: end; }
.axis { font-size: 14px; font-weight: 400; fill: #5a1822; text-anchor: middle; }
.shape { font: 70px "Liberation Sans", "Noto Sans CJK SC", sans-serif; fill: none; stroke: #555; stroke-width: 1; stroke-dasharray: 8 3; }
.latin { font-size: 71px; }
.rot { color: #666; }

/* Docked panels */
.panels { flex: none; width: 432px; padding: 2px 0 2px 10px; display: flex; flex-direction: column; }
.dock { flex: none; height: 20px; margin: 0; padding: 0 2px 0 6px; display: flex; align-items: center; justify-content: space-between; font-size: 13px; font-weight: 500; color: #fff; background: linear-gradient(90deg, #000 3%, #561616 28%, #c13033 62%, #d4622e 82%, #e0702a); }
.dock span { display: flex; gap: 2px; color: #7a7470; }
.dock svg { width: 13px; height: 13px; }
.layers { display: flex; padding: 0 1px; gap: 2px; }
.list { flex: 1; height: 281px; border: 1px solid #cfcfcf; background: #fff; display: flex; flex-direction: column; }
.list table { width: 100%; table-layout: fixed; border-collapse: collapse; }
.c1 { width: 33px; }
.c2 { width: 42px; }
.c3 { width: 92px; }
.c4 { width: 73px; }
.c5 { width: 52px; }
.c6 { width: 43px; }
.list th { height: 20px; padding: 0 0 0 3px; text-align: left; font-weight: 500; border-right: 1px solid #d0d0d0; border-bottom: 1px solid #c4c4c4; background: #f6f6f6; }
.list th:last-child { border-right: 0; }
.list th.num { padding-left: 6px; }
.list td { height: 26px; padding: 0 0 0 4px; background: #f0f0f0; white-space: nowrap; }
.list td:nth-child(3) { padding: 0 0 0 1px; }
.list td:nth-child(n+5) { padding-left: 7px; }
.list .pick { height: 25px; }
.chip { display: block; width: 32px; height: 21px; line-height: 20px; text-align: center; font-size: 12px; font-weight: 400; color: #cfe0f8; background: #00203c; }
.hscroll { margin-top: auto; height: 15px; display: flex; align-items: center; border-top: 1px solid #cfcfcf; }
.hscroll svg { width: 14px; height: 8px; color: #444; }
.hscroll i { flex: 1; height: 14px; border: 1px solid #c4c4c4; border-width: 0 1px; background: #f9f9f9; }
.order { flex: none; width: 30px; padding-top: 31px; display: flex; flex-direction: column; }
.order button, .push { border: 1px solid #b8b8b8; border-radius: 3px; background: linear-gradient(#fff, #f5f5f5); }
.order button { height: 31px; display: grid; place-items: center; }
.order .apart { margin-top: 32px; }
.order svg { width: 18px; height: 18px; }
.settings { margin: 7px 1px 0 2px; height: 89px; padding: 4px 6px; border: 2px solid #e4e4e4; display: grid; grid-template-columns: 1fr 80px 96px 92px; grid-auto-rows: 23px; gap: 4px 7px; align-items: center; text-align: right; white-space: nowrap; }
.settings input { text-align: right; padding-right: 6px; }
.settings label { justify-self: end; }
.color { height: 25px; background: #000; }
.muted { color: #808080; font-weight: 400; }
.tabs { flex: none; display: flex; align-items: flex-start; border-top: 1px solid #b8b8b8; margin-top: 3px; }
.tabs button { height: 25px; padding: 0 13px; border: 1px solid #c0c0c0; border-top: 0; border-left: 0; background: #dcdcdc; white-space: nowrap; }
.tabs .cur { height: 27px; margin-top: -1px; border-left: 1px solid #b0b0b0; border-radius: 0 0 3px 3px; background: #f8f8f8; }
.grip.split { align-self: center; height: 3px; margin: 2px 0 4px; }
.low { margin-top: auto; }

.laser { padding: 0 1px; }
.row { display: flex; align-items: center; }
.right { justify-content: flex-end; gap: 7px; }
.start { width: 99px; overflow: hidden; }
.start select { padding-left: 4px; text-overflow: clip; }
.origin { margin-top: 3px; padding-right: 2px; gap: 9px; }
.origin fieldset { width: 95px; height: 52px; margin: 0; padding: 1px 0 0 1px; border: 1px solid #dedede; display: grid; grid-template-columns: repeat(3, 30px); grid-auto-rows: 16px; }
.origin input { appearance: none; width: 15px; height: 15px; border: 1px solid #a0a0a0; border-radius: 50%; background: #f5f5f5; }
.origin input:checked { background: radial-gradient(circle, #808080 3px, #f5f5f5 4px); }
.laser .cutsel { margin-top: 2px; height: 20px; }
.between { justify-content: space-between; }
.push { height: 26px; text-align: center; white-space: nowrap; }
.opt { width: 206px; }
.dev { margin-top: 1px; gap: 7px; }
.dev .push { width: 85px; }
.machine { flex: 1; padding-left: 5px; }
.machine svg { width: 17px; height: 17px; }
.machine select { padding-left: 3px; }

/* Colour bar */
.palette { height: 40px; display: flex; align-items: center; border-bottom: 1px solid #b4b4b4; background: linear-gradient(#fbfbfb, #f0f0f0); }
.palette .grip { margin-right: 8px; }
.palette button { flex: none; width: 26px; height: 26px; margin-right: 9px; color: #fff; font-size: 12px; font-weight: 500; }
.palette .k { color: #111; }
.palette .sel { outline: 1px solid #b0b0b0; outline-offset: 3px; border-radius: 1px; }
.palette .sep { margin: 0 8px 0 0; }

/* Status bar */
.status { height: 28px; position: relative; display: flex; align-items: center; gap: 16px; padding-left: 2px; white-space: nowrap; }
.coords, .bounds { font-size: 14px; font-weight: 400; color: #000; }
.coords { margin-left: 12px; }
.bounds { width: 257px; overflow: hidden; }
.resize { position: absolute; right: 2px; bottom: 2px; width: 12px; height: 12px; background: radial-gradient(circle, #aaa 36%, transparent 40%) 0 0 / 4px 4px; clip-path: polygon(100% 0, 100% 100%, 0 100%); }
```
